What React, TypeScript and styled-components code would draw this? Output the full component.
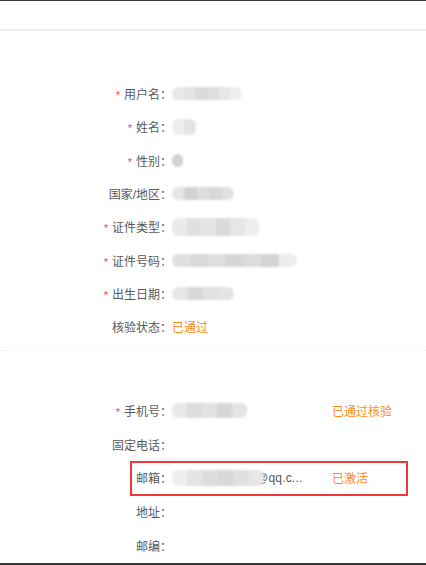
import React from "react";
import styled, { createGlobalStyle, css } from "styled-components";

const Global = createGlobalStyle`
  html, body { margin: 0; padding: 0; background: #fff; }
  body {
    font-family: "Liberation Sans", "Noto Sans CJK SC", sans-serif;
    font-size: 12px;
    color: #555;
  }
`;

const Page = styled.div`
  width: 426px;
  height: 565px;
  box-sizing: border-box;
  border-top: 1px solid #3a3a3a;
  border-bottom: 2px solid #3a3a3a;
  overflow: hidden;
  display: flex;
  flex-direction: column;
`;

const Header = styled.div`
  height: 28px;
  border-bottom: 2px solid #eeeeee;
  flex: none;
`;

const Section = styled.div<{ $padTop: number; $padBottom: number; $divider?: boolean }>`
  padding-top: ${(p) => p.$padTop}px;
  padding-bottom: ${(p) => p.$padBottom}px;
  display: flex;
  flex-direction: column;
  ${(p) =>
    p.$divider &&
    css`
      border-bottom: 1px dotted #ececec;
    `}
`;

const Row = styled.div<{ $h: number; $marked?: boolean }>`
  position: relative;
  height: ${(p) => p.$h}px;
  display: flex;
  align-items: center;
  ${(p) =>
    p.$marked &&
    css`
      &::after {
        content: "";
        position: absolute;
        left: 130px;
        width: 278px;
        top: 0;
        bottom: -1px;
        box-sizing: border-box;
        border: 2px solid #f2363a;
      }
    `}
`;

const Label = styled.div`
  width: 172px;
  flex: none;
  text-align: right;
  color: #595959;
  white-space: nowrap;
`;

const Star = styled.span`
  color: #f04848;
  margin-right: 4px;
  font-size: 11px;
`;

const Value = styled.div`
  width: 160px;
  flex: none;
  display: flex;
  align-items: center;
  color: #555;
`;

const Status = styled.div`
  color: #ff8a1c;
  white-space: nowrap;
`;

const Mosaic = styled.div<{ $w: number; $h: number }>`
  width: ${(p) => p.$w}px;
  height: ${(p) => p.$h}px;
  display: flex;
  filter: blur(1.2px);
  border-radius: 6px;
  overflow: hidden;
  flex: none;
  position: relative;
  z-index: 1;
`;

const Tile = styled.div<{ $c: string }>`
  flex: 1;
  background: ${(p) => p.$c};
`;

const EmailText = styled.span`
  color: #555;
  margin-left: -8px;
  letter-spacing: 0.2px;
`;

const Blur = ({ w, h, tones }: { w: number; h: number; tones: string[] }) => (
  <Mosaic $w={w} $h={h}>
    {tones.map((c, i) => (
      <Tile key={i} $c={c} />
    ))}
  </Mosaic>
);

const T = ["#eeeeee", "#e4e4e4", "#dcdcdc", "#d8d8d8", "#e0e0e0", "#e6e6e6"];

export default function App() {
  return (
    <>
      <Global />
      <Page>
        <Header />
        <Section $padTop={46} $padBottom={7} $divider>
          <Row $h={33.3}>
            <Label><Star>*</Star>用户名：</Label>
            <Value><Blur w={70} h={13} tones={["#e8e8e8", "#e4e4e4", "#dadada", "#dedede", "#e6e6e6", "#eeeeee"]} /></Value>
          </Row>
          <Row $h={33.3}>
            <Label><Star>*</Star>姓名：</Label>
            <Value><Blur w={24} h={16} tones={["#eeeeee", "#e4e4e4"]} /></Value>
          </Row>
          <Row $h={33.3}>
            <Label><Star>*</Star>性别：</Label>
            <Value><Blur w={11} h={13} tones={["#d2d2d2"]} /></Value>
          </Row>
          <Row $h={33.3}>
            <Label>国家/地区：</Label>
            <Value><Blur w={62} h={13} tones={["#e6e6e6", "#d2d2d2", "#dedede", "#d8d8d8", "#e0e0e0"]} /></Value>
          </Row>
          <Row $h={33.3}>
            <Label><Star>*</Star>证件类型：</Label>
            <Value><Blur w={87} h={18} tones={["#eaeaea", "#e0e0e0", "#e4e4e4", "#dadada", "#e6e6e6", "#eeeeee"]} /></Value>
          </Row>
          <Row $h={33.3}>
            <Label><Star>*</Star>证件号码：</Label>
            <Value><Blur w={125} h={13} tones={["#e0e0e0", "#dadada", "#dedede", "#d6d6d6", "#dcdcdc", "#d4d4d4", "#ededed"]} /></Value>
          </Row>
          <Row $h={33.3}>
            <Label><Star>*</Star>出生日期：</Label>
            <Value><Blur w={62} h={13} tones={["#e6e6e6", "#d8d8d8", "#e0e0e0", "#e4e4e4"]} /></Value>
          </Row>
          <Row $h={33.3}>
            <Label>核验状态：</Label>
            <Value><Status>已通过</Status></Value>
          </Row>
        </Section>
        <Section $padTop={42} $padBottom={0}>
          <Row $h={33.75}>
            <Label><Star>*</Star>手机号：</Label>
            <Value><Blur w={75} h={15} tones={["#e8e8e8", "#dcdcdc", "#e2e2e2", "#d6d6d6", "#e4e4e4"]} /></Value>
            <Status>已通过核验</Status>
          </Row>
          <Row $h={33.75}>
            <Label>固定电话：</Label>
          </Row>
          <Row $h={33.75} $marked>
            <Label>邮箱：</Label>
            <Value>
              <Blur w={92} h={16} tones={T} />
              <EmailText>@qq.c...</EmailText>
            </Value>
            <Status>已激活</Status>
          </Row>
          <Row $h={33.75}>
            <Label>地址：</Label>
          </Row>
          <Row $h={33.75}>
            <Label>邮编：</Label>
          </Row>
        </Section>
      </Page>
    </>
  );
}
